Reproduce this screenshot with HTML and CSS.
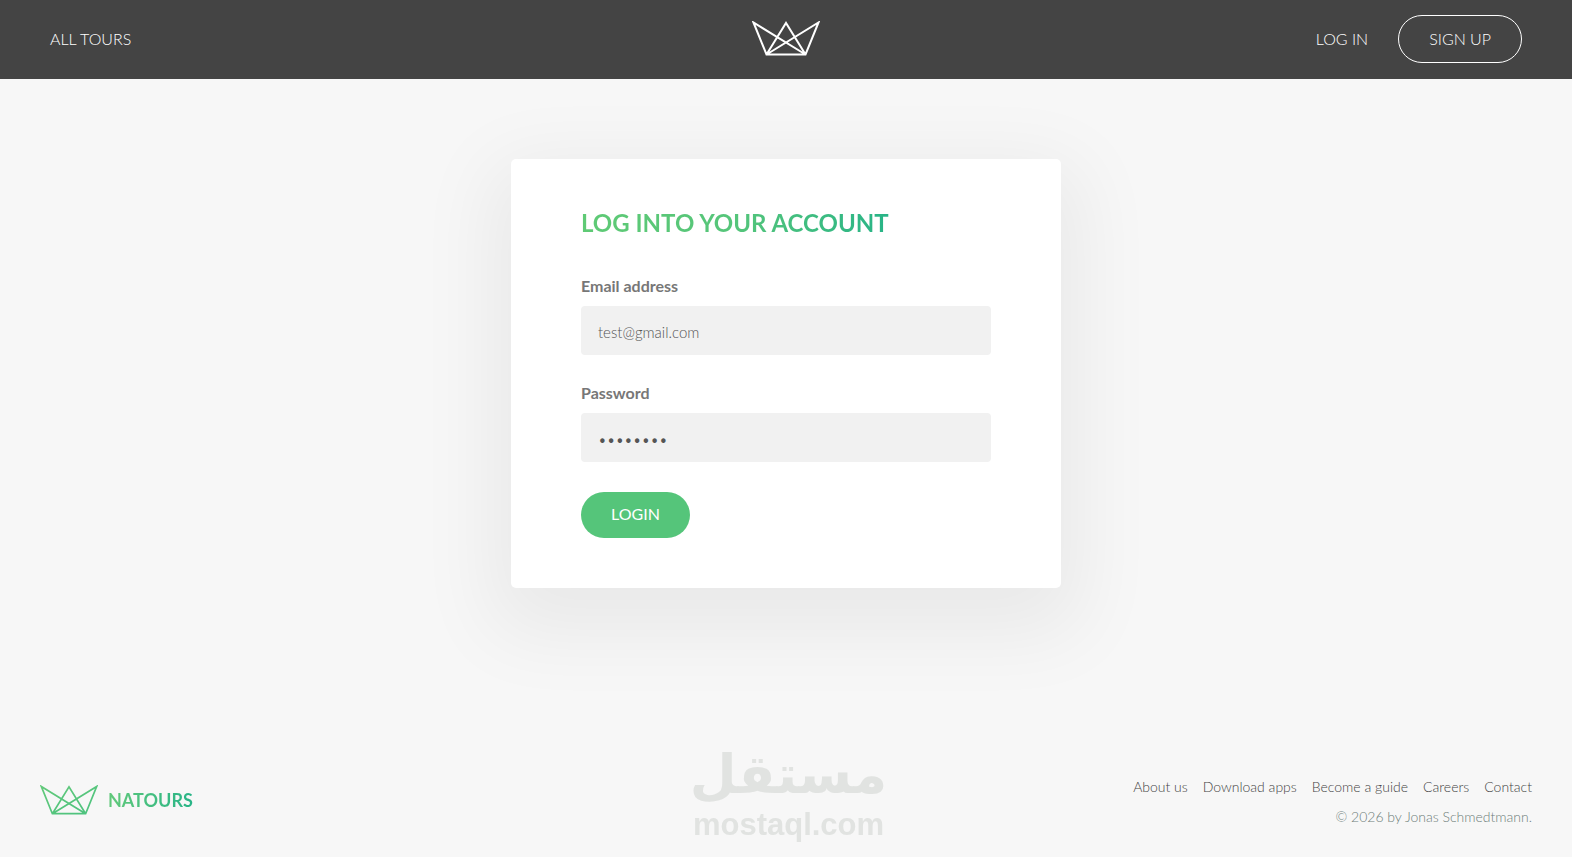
FILE: index.html
```html
<!DOCTYPE html>
<html lang="en">
<head>
    <meta charset="UTF-8">
    <meta name="viewport" content="width=device-width, initial-scale=1.0">
    <title>Natours | Log into your account</title>
    <link rel="stylesheet" href="styles.css">
</head>
<body>
    <header class="header">
        <nav class="nav nav--tours">
            <a class="nav__el" href="#">All tours</a>
        </nav>
        <a class="header__logo" href="#" aria-label="Natours">
            <svg class="crown" viewBox="0 0 68 36" width="68" height="36">
                <path d="M1.5 1.5 L14.5 33.5 H53.5 L66.5 1.5 L14.5 33.5 L34 2 L53.5 33.5 Z"/>
            </svg>
        </a>
        <nav class="nav nav--user">
            <a class="nav__el" href="#">Log in</a>
            <a class="nav__el nav__el--cta" href="#">Sign up</a>
        </nav>
    </header>

    <main class="main">
        <div class="login-form">
            <h2 class="heading">Log into your account</h2>
            <form class="form">
                <div class="form__group">
                    <label class="form__label" for="email">Email address</label>
                    <input class="form__input" id="email" type="email" value="test@gmail.com" required>
                </div>
                <div class="form__group">
                    <label class="form__label" for="password">Password</label>
                    <input class="form__input" id="password" type="password" value="test1234" required>
                </div>
                <button class="btn" type="button">Login</button>
            </form>
        </div>
    </main>

    <footer class="footer">
        <a class="footer__logo" href="#">
            <svg class="crown crown--green" viewBox="0 0 68 36" width="58" height="31">
                <defs>
                    <linearGradient id="green" x1="0" y1="0" x2="1" y2="1">
                        <stop offset="0" stop-color="#62c97a"/>
                        <stop offset="1" stop-color="#4cc27f"/>
                    </linearGradient>
                </defs>
                <path d="M1.5 1.5 L14.5 33.5 H53.5 L66.5 1.5 L14.5 33.5 L34 2 L53.5 33.5 Z"/>
            </svg>
            <span class="footer__name">NATOURS</span>
        </a>
        <div class="footer__info">
            <ul class="footer__nav">
                <li><a href="#">About us</a></li>
                <li><a href="#">Download apps</a></li>
                <li><a href="#">Become a guide</a></li>
                <li><a href="#">Careers</a></li>
                <li><a href="#">Contact</a></li>
            </ul>
            <p class="footer__copyright">© 2026 by Jonas Schmedtmann.</p>
        </div>
    </footer>

    <div class="watermark">
        <span class="watermark__ar" lang="ar" dir="rtl">مستقل</span>
        <span class="watermark__en">mostaql.com</span>
    </div>
</body>
</html>
```
FILE: styles.css
```css
*,
*::before,
*::after {
    margin: 0;
    padding: 0;
    box-sizing: border-box;
}

html {
    background-color: #fff;
}

body {
    display: flex;
    flex-direction: column;
    min-height: 100vh;
    margin-right: 5px;
    background-color: #f7f7f7;
    color: #777;
    font-family: 'Lato', sans-serif;
    font-size: 16px;
    font-weight: 300;
    line-height: 26px;
}

a {
    color: inherit;
    text-decoration: none;
}

/* HEADER */
.header {
    display: grid;
    grid-template-columns: 1fr auto 1fr;
    align-items: center;
    height: 79px;
    padding: 0 50px 2px;
    background-color: #444;
}

.nav {
    display: flex;
    align-items: center;
    gap: 30px;
}

.nav--user {
    justify-content: flex-end;
}

.nav__el {
    color: #fff;
    text-transform: uppercase;
}

.nav__el--cta {
    padding: 10px 30px;
    border: 1px solid currentColor;
    border-radius: 100px;
}

.header__logo {
    display: flex;
}

.crown {
    fill: none;
    stroke: #fff;
    stroke-width: 2;
}

.crown--green {
    stroke: url(#green);
}

/* LOGIN FORM */
.main {
    padding: 80px 60px;
}

.login-form {
    max-width: 550px;
    margin: 0 auto;
    padding: 49px 70px 50px;
    border-radius: 5px;
    background-color: #fff;
    box-shadow: 0 25px 80px 20px rgba(0, 0, 0, 0.06);
}

.heading {
    width: fit-content;
    margin-bottom: 35px;
    background-image: linear-gradient(to right, #5fca75, #55c57a 50%, #28b487);
    background-clip: text;
    -webkit-background-clip: text;
    color: transparent;
    font-size: 24px;
    font-weight: 700;
    line-height: 30px;
    text-transform: uppercase;
}

.form__group {
    display: flex;
    flex-direction: column;
    gap: 7px;
    margin-bottom: 25px;
}

.form__group:nth-of-type(2) {
    margin-bottom: 30px;
}

.form__label {
    font-weight: 700;
}

.form__input {
    width: 100%;
    height: 49px;
    padding: 0 17px;
    border: none;
    border-top: 2px solid transparent;
    border-radius: 4px;
    background-color: #f1f1f1;
    color: #555;
    font-family: inherit;
    font-size: 15px;
    font-weight: 300;
}

.form__input:focus {
    outline: none;
    border-bottom: 3px solid #55c57a;
}

.btn {
    display: block;
    padding: 9px 30px 11px;
    border: none;
    border-radius: 100px;
    background-color: #55c57a;
    color: #fff;
    font-family: inherit;
    font-size: 16px;
    font-weight: 400;
    line-height: 26px;
    text-transform: uppercase;
    cursor: pointer;
}

/* FOOTER */
.footer {
    display: flex;
    justify-content: space-between;
    align-items: center;
    margin-top: auto;
    padding: 0 40px 27px;
    font-size: 14px;
}

.footer__logo {
    display: flex;
    align-items: center;
    gap: 10px;
    padding-bottom: 4px;
}

.footer__name {
    background-image: linear-gradient(to right, #62c97a, #28b487);
    background-clip: text;
    -webkit-background-clip: text;
    color: transparent;
    font-size: 18px;
    font-weight: 700;
}

.footer__info {
    display: flex;
    flex-direction: column;
    align-items: flex-end;
    gap: 4px;
}

.footer__nav {
    display: flex;
    gap: 15px;
    list-style: none;
    color: #444;
}

.footer__copyright {
    color: #6f7f7b;
}

/* WATERMARK */
.watermark {
    position: fixed;
    bottom: 14px;
    left: 50%;
    display: flex;
    flex-direction: column;
    align-items: center;
    transform: translateX(-50%);
    color: #e1e3e1;
    font-weight: 700;
    pointer-events: none;
}

.watermark__ar {
    font-family: 'DejaVu Sans', sans-serif;
    font-size: 54px;
    line-height: 64px;
}

.watermark__en {
    font-family: 'Liberation Sans', sans-serif;
    font-size: 31px;
    line-height: 36px;
}
```
